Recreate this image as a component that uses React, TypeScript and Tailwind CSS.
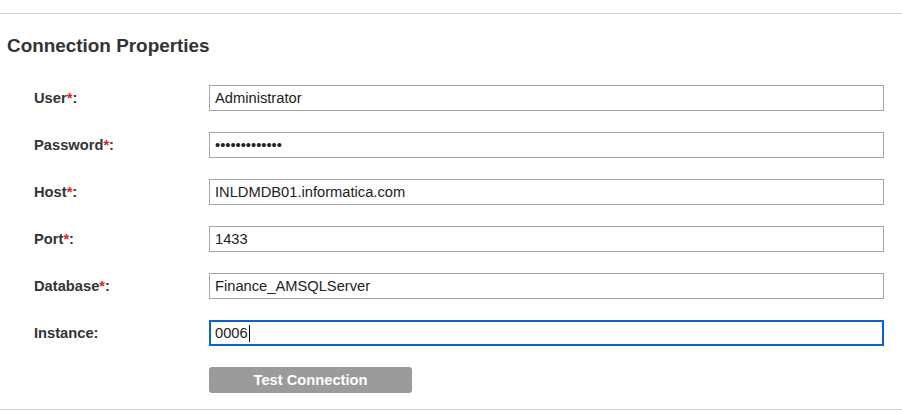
const fields = [
  { label: "User", required: true, value: "Administrator" },
  { label: "Password", required: true, value: "•••••••••••••" },
  { label: "Host", required: true, value: "INLDMDB01.informatica.com" },
  { label: "Port", required: true, value: "1433" },
  { label: "Database", required: true, value: "Finance_AMSQLServer" },
  { label: "Instance", required: false, value: "0006", focused: true },
];

export default function App() {
  return (
    <div
      className="w-[902px] h-[413px] bg-white pt-[13px] text-[#333]"
      style={{ fontFamily: '"Liberation Sans", Arial, sans-serif' }}
    >
      <div className="border-t border-[#d3d3d3]">
        {/* Heading */}
        <h2 className="mt-[21px] pl-[7px] text-[18.9px] leading-[22px] font-bold text-[#333]">
          Connection Properties
        </h2>

        {/* Form rows */}
        <div className="mt-[28px] flex flex-col gap-[21px]">
          {fields.map((f) => (
            <div key={f.label} className="flex items-center">
              <label className="w-[209px] pl-[34px] text-[14.7px] font-bold text-[#333]">
                {f.label}
                {f.required && <span className="text-[#e02020]">*</span>}:
              </label>
              <div
                className={`flex h-[26px] w-[675px] items-center text-[14.7px] text-[#222] ${
                  f.focused
                    ? "border-2 border-[#0b64c8] pl-[4px]"
                    : "border border-[#a6a6a6] pl-[5px]"
                }`}
              >
                <span>{f.value}</span>
                {f.focused && <span className="ml-px h-[17px] w-px bg-black" />}
              </div>
            </div>
          ))}
        </div>

        {/* Action */}
        <div className="mt-[21px] pl-[209px]">
          <button className="h-[26px] w-[203px] rounded-[3px] bg-[#9b9b9b] text-[14.7px] font-bold text-white">
            Test Connection
          </button>
        </div>

        <div className="mt-[16px] border-t border-[#d3d3d3]" />
      </div>
    </div>
  );
}
